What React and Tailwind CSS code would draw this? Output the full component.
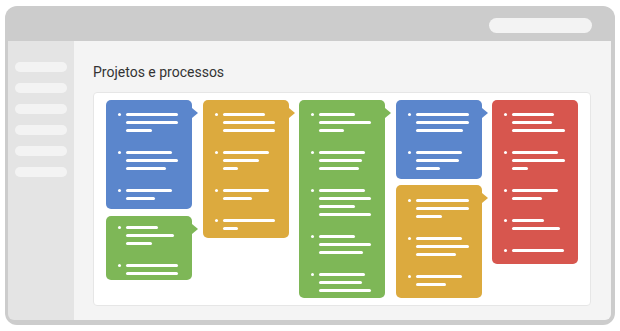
import React from "react";

const BLUE = "bg-[#5b86cc]";
const YELLOW = "bg-[#dcaa3e]";
const GREEN = "bg-[#7eb757]";
const RED = "bg-[#d7564e]";

const ARROW = {
  blue: "border-l-[#5b86cc]",
  yellow: "border-l-[#dcaa3e]",
  green: "border-l-[#7eb757]",
};

function Card({ bg, arrow, height, top, items }) {
  return (
    <div className={`relative ${bg} ${height} ${top} rounded-[5px] pl-[12px] flex flex-col gap-[19px]`}>
      {arrow && (
        <span
          className={`absolute left-full top-[8px] w-0 h-0 border-y-[5px] border-y-transparent border-l-[6px] ${ARROW[arrow]}`}
        />
      )}
      {items.map((lines, i) => (
        <div key={i} className="flex items-start">
          <span className="w-[3px] h-[3px] rounded-full bg-white" />
          <div className="ml-[5px] flex flex-col gap-[5px]">
            {lines.map((w, j) => (
              <span key={j} className="h-[3px] rounded-full bg-white" style={{ width: w }} />
            ))}
          </div>
        </div>
      ))}
    </div>
  );
}

export default function App() {
  return (
    <div className="w-[620px] h-[331px] bg-white pt-[6px] pl-[5px] font-['Roboto',sans-serif]">
      <div className="w-[610px] h-[319px] bg-[#cccccc] rounded-[12px] flex flex-col">
        <div className="h-[35px] flex justify-end pt-[12px] pr-[23px]">
          <div className="w-[103px] h-[15px] rounded-full bg-[#f3f3f3]" />
        </div>
        <div className="flex flex-1 ml-[3px] mr-[4px] mb-[5px] rounded-b-[6px] overflow-hidden">
          <div className="w-[66px] bg-[#e4e4e4] pt-[21px] px-[7px] flex flex-col gap-[11px]">
            {[0, 1, 2, 3, 4, 5].map((i) => (
              <div key={i} className="h-[10px] rounded-full bg-[#f3f3f3]" />
            ))}
          </div>
          <div className="flex-1 bg-[#f4f4f4] pl-[19px] pr-[20px] pt-[23px]">
            <h1 className="text-[14px] leading-[16px] text-[#333333] mb-[12px]">Projetos e processos</h1>
            <div className="h-[214px] bg-white border border-[#e6e6e6] rounded-[4px] pl-[12px] pt-[7px] flex gap-[10.5px]">
              <div className="w-[86px] flex flex-col gap-[7px]">
                <Card
                  bg={BLUE}
                  arrow="blue"
                  height="h-[109px]"
                  top="pt-[13px]"
                  items={[[52, 52, 26], [46, 52, 40], [46, 29]]}
                />
                <Card
                  bg={GREEN}
                  arrow="green"
                  height="h-[64px]"
                  top="pt-[10px]"
                  items={[[32, 48, 26], [52, 52]]}
                />
              </div>
              <div className="w-[86px]">
                <Card
                  bg={YELLOW}
                  arrow="yellow"
                  height="h-[138px]"
                  top="pt-[13px]"
                  items={[[42, 52, 52], [46, 36, 15], [46, 29], [52, 15]]}
                />
              </div>
              <div className="w-[86px]">
                <Card
                  bg={GREEN}
                  arrow="green"
                  height="h-[198px]"
                  top="pt-[13px]"
                  items={[[36, 52, 25], [46, 43, 40], [46, 52, 36, 52], [36, 52, 44], [46, 43, 52]]}
                />
              </div>
              <div className="w-[86px] flex flex-col gap-[6px]">
                <Card
                  bg={BLUE}
                  arrow="blue"
                  height="h-[79px]"
                  top="pt-[13px]"
                  items={[[53, 53, 47], [46, 43, 24]]}
                />
                <Card
                  bg={YELLOW}
                  arrow="yellow"
                  height="h-[113px]"
                  top="pt-[14px]"
                  items={[[53, 53, 26], [46, 53, 40], [46, 30]]}
                />
              </div>
              <div className="w-[86px]">
                <Card
                  bg={RED}
                  height="h-[164px]"
                  top="pt-[13px]"
                  items={[[42, 40, 53], [46, 53, 16], [46, 30], [32, 48], [52]]}
                />
              </div>
            </div>
          </div>
        </div>
      </div>
    </div>
  );
}
